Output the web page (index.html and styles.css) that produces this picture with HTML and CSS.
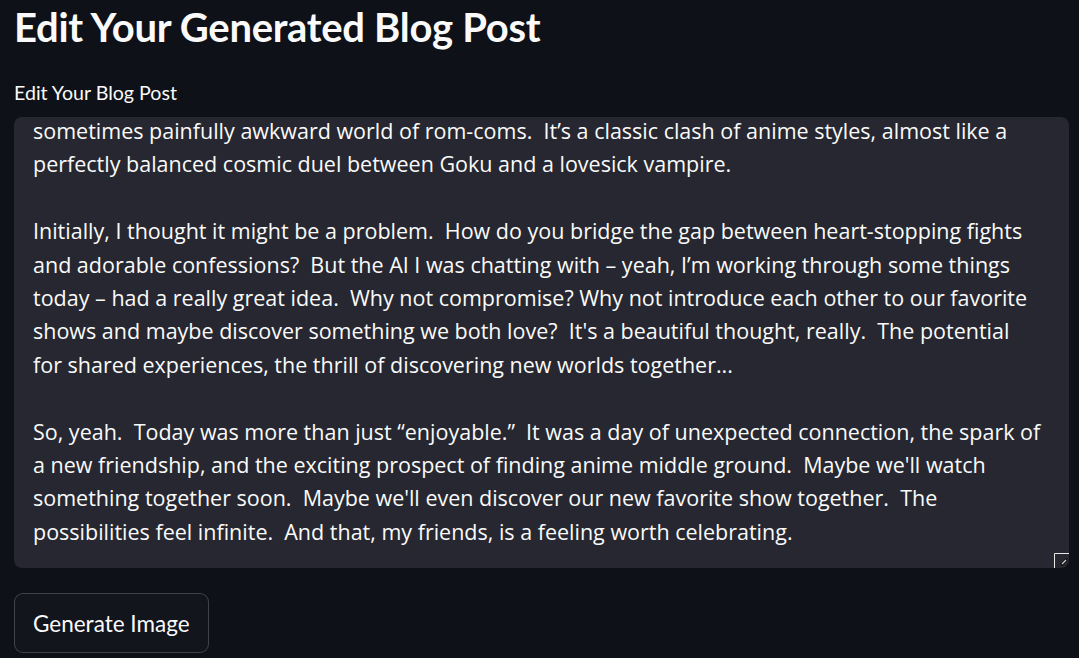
FILE: index.html
```html
<!DOCTYPE html>
<html lang="en">
<head>
<meta charset="utf-8">
<title>Edit Your Generated Blog Post</title>
<link rel="stylesheet" href="styles.css">
</head>
<body>
<main class="page">
  <h1 class="title">Edit Your Generated Blog Post</h1>
  <label class="label">Edit Your Blog Post</label>
  <div class="editor">
    <div class="text">
      <span class="line">sometimes painfully awkward world of rom-coms.&nbsp; It’s a classic clash of anime styles, almost like a</span>
      <span class="line">perfectly balanced cosmic duel between Goku and a lovesick vampire.</span>
      <span class="line">&nbsp;</span>
      <span class="line">Initially, I thought it might be a problem.&nbsp; How do you bridge the gap between heart-stopping fights</span>
      <span class="line">and adorable confessions?&nbsp; But the AI I was chatting with – yeah, I’m working through some things</span>
      <span class="line">today – had a really great idea.&nbsp; Why not compromise? Why not introduce each other to our favorite</span>
      <span class="line">shows and maybe discover something we both love?&nbsp; It's a beautiful thought, really.&nbsp; The potential</span>
      <span class="line">for shared experiences, the thrill of discovering new worlds together...</span>
      <span class="line">&nbsp;</span>
      <span class="line">So, yeah.&nbsp; Today was more than just “enjoyable.”&nbsp; It was a day of unexpected connection, the spark of</span>
      <span class="line">a new friendship, and the exciting prospect of finding anime middle ground.&nbsp; Maybe we'll watch</span>
      <span class="line">something together soon.&nbsp; Maybe we'll even discover our new favorite show together.&nbsp; The</span>
      <span class="line">possibilities feel infinite.&nbsp; And that, my friends, is a feeling worth celebrating.</span>
    </div>
    <svg class="grip" width="15" height="15" viewBox="0 0 15 15">
      <path d="M0.5 15V0.5H15" fill="none" stroke="#e6e6e6" stroke-width="1"/>
      <path d="M13 6L7 12" stroke="#111" stroke-width="3"/>
      <path d="M12 7L8 11" stroke="#cfcfcf" stroke-width="1.2"/>
    </svg>
  </div>
  <button class="btn" type="button">Generate Image</button>
</main>
</body>
</html>
```

FILE: styles.css
```css
html, body {
  margin: 0;
  padding: 0;
  background: #0e1117;
  color: #fafafa;
  font-family: Lato, "Open Sans", sans-serif;
}
.page {
  display: flex;
  flex-direction: column;
  align-items: flex-start;
  padding: 0 10px 0 14px;
  height: 658px;
  overflow: hidden;
}
.title {
  margin: 0;
  padding-top: 3px;
  font-size: 40px;
  font-weight: 700;
  line-height: 48px;
  letter-spacing: -0.3px;
}
.label {
  margin-top: 30px;
  font-size: 19.6px;
  line-height: 24px;
}
.editor {
  position: relative;
  align-self: stretch;
  margin-top: 12px;
  height: 451px;
  background: #262730;
  border-radius: 8px;
  overflow: hidden;
}
.text {
  display: flex;
  flex-direction: column;
  padding: 0 19px;
  margin-top: -3px;
  font-family: "Open Sans", sans-serif;
  font-size: 21.5px;
  line-height: 33.4px;
}
.line {
  white-space: nowrap;
}
.grip {
  position: absolute;
  right: 0;
  bottom: 0;
}
.btn {
  margin-top: 25px;
  height: 60px;
  padding: 0 18px;
  background: #12151c;
  color: #fafafa;
  border: 1px solid rgba(250, 250, 250, 0.2);
  border-radius: 9px;
  font-family: inherit;
  font-size: 22.5px;
}
```
